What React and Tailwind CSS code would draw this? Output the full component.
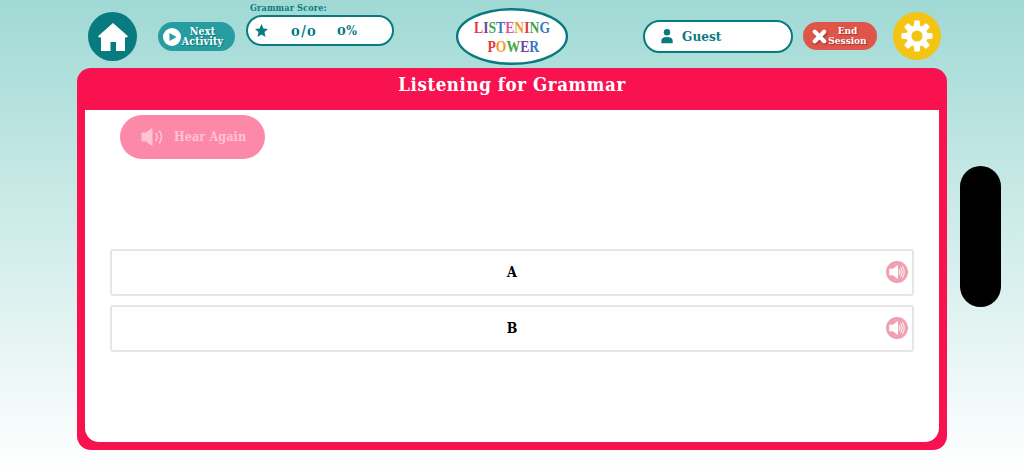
import { clsx } from 'clsx';

const answers = ['A', 'B'];

const logoLines = [
  {
    y: 25,
    x: 18,
    letters: [
      ['L', '#df3b3f'], ['I', '#7444a0'], ['S', '#3fa545'], ['T', '#3c78c3'], ['E', '#d659a5'],
      ['N', '#f39a2c'], ['I', '#df3b3f'], ['N', '#3fa545'], ['G', '#3c78c3'],
    ],
  },
  {
    y: 43.5,
    x: 31.5,
    letters: [['P', '#df3b3f'], ['O', '#f39a2c'], ['W', '#3fa545'], ['E', '#7444a0'], ['R', '#3c78c3']],
  },
];

const HomeIcon = () => (
  <svg viewBox="0 0 30 28" className="w-[30px] h-7 fill-white">
    <path d="M15 0 30 13.2 28.6 14.6H27V28H18V19H12.5V28H3V14.6H1.4L0 13.2Z" />
  </svg>
);

const GearIcon = () => (
  <svg viewBox="0 0 32 32" className="w-8 h-8">
    <g className="fill-white">
      {[0, 45, 90, 135, 180, 225, 270, 315].map((angle) => (
        <path key={angle} d="M13.2 1.2Q13.2 .5 13.9 .5H18.1Q18.8 .5 18.8 1.2L19.4 8H12.6Z" transform={`rotate(${angle} 16 16)`} />
      ))}
      <circle cx="16" cy="16" r="10.6" />
    </g>
    <circle cx="16" cy="16" r="5.6" fill="#f4c414" />
  </svg>
);

const SpeakerIcon = ({ className }) => (
  <svg viewBox="0 0 22 18" className={className} fill="none" stroke="currentColor" strokeWidth="1.6" strokeLinecap="round">
    <path d="M.5 5.5Q.5 4.5 1.5 4.5H5L10.2.6Q11.5 0 11.5 1.3V16.7Q11.5 18 10.2 17.4L5 13.5H1.5Q.5 13.5 .5 12.5Z" fill="currentColor" stroke="none" />
    <path d="M15 5.5Q17.2 9 15 12.5M18.6 3.2Q22.4 9 18.6 14.8" />
  </svg>
);

const RoundSpeaker = () => (
  <svg viewBox="0 0 22 22" className="w-[22px] h-[22px]">
    <circle cx="11" cy="11" r="11" fill="#efa0b1" />
    <path d="M3.2 7.7H6.8L12 4V18L6.8 14.3H3.2Z" fill="#fff" />
    <path d="M13.4 8.5Q15 11 13.4 13.5M15 6.8Q17.6 11 15 15.2M16.6 5.3Q20 11 16.6 16.7" fill="none" stroke="#fff" strokeWidth="1" strokeLinecap="round" />
  </svg>
);

const Logo = () => (
  <svg viewBox="0 0 112 57" className="w-28 h-[57px] ml-[62px] mt-[7.5px] shrink-0">
    <ellipse cx="56" cy="28.5" rx="54.9" ry="27.3" fill="#fff" stroke="#087b81" strokeWidth="2.4" />
    {logoLines.map((line) => (
      <g key={line.y} transform={`translate(${line.x} ${line.y}) scale(.805 1)`}>
        <text className="font-['Liberation_Serif',serif] text-[17px] font-bold">
          {line.letters.map(([letter, color], i) => (
            <tspan key={i} fill={color}>{letter}</tspan>
          ))}
        </text>
      </g>
    ))}
  </svg>
);

// Zero drawn at x-height, like an old-style figure
const Zero = () => <span className="inline-block text-[11.5px] leading-none scale-x-125">0</span>;

const Header = () => (
  <header className="flex items-start h-[68px] pl-[88px]">
    <button className="flex items-center justify-center shrink-0 w-[49px] h-[49px] mt-3 rounded-full bg-[#087b81]">
      <HomeIcon />
    </button>

    <button className="flex items-center shrink-0 w-[77px] h-[29px] ml-[21px] mt-[22px] pl-[5px] rounded-full bg-[#279da2] text-white">
      <svg viewBox="0 0 18 18" className="w-[18px] h-[18px] shrink-0">
        <circle cx="9" cy="9" r="9" fill="#fff" />
        <path d="M6.5 5 13.5 9 6.5 13Z" fill="#279da2" />
      </svg>
      <span className="w-[43px] -mt-[2px] text-center text-[10.5px] leading-[10px] tracking-[.2px] font-bold [text-shadow:1px_1px_1px_#08777b]">
        Next<br />Activity
      </span>
    </button>

    <div className="w-[148px] shrink-0 ml-[11px] pt-[2px] text-[#087b81] font-bold">
      <div className="h-[13px] pl-1 text-[9px] leading-3 tracking-[.15px] whitespace-nowrap">Grammar Score:</div>
      <div className="flex items-center h-[31px] rounded-full border-2 border-[#087b81] bg-white pl-[7px]">
        <svg viewBox="0 0 24 24" className="w-[13px] h-[13px] fill-[#087b81]">
          <path d="M12 0 15.5 8.2 24 9.1 17.5 14.8 19.4 24 12 19.2 4.6 24 6.5 14.8 0 9.1 8.5 8.2Z" />
        </svg>
        <span className="ml-[24px] w-[46px] text-[14px] leading-5 whitespace-nowrap"><Zero /><span className="px-[2px]">/</span><Zero /></span>
        <span className="text-[12.5px] leading-5 whitespace-nowrap"><Zero /><span className="pl-[1px]">%</span></span>
      </div>
    </div>

    <Logo />

    <div className="flex items-center shrink-0 w-[150px] h-[33px] ml-[75px] mt-5 pl-4 rounded-full border-2 border-[#087b81] bg-white text-[#087b81]">
      <svg viewBox="0 0 12 15" className="w-3 h-[15px] fill-[#087b81]">
        <circle cx="6" cy="3.3" r="3.2" />
        <path d="M.3 14.2V12Q.3 8 6 8T11.7 12V14.2Z" />
      </svg>
      <span className="ml-[9px] -mt-px text-[13.5px] leading-5 font-bold">Guest</span>
    </div>

    <button className="flex items-center shrink-0 w-[74px] h-[28px] ml-[10px] mt-[22px] pl-[9px] rounded-full bg-[#df5549] text-white">
      <svg viewBox="0 0 16 16" className="w-[15px] h-[15px] shrink-0 drop-shadow-[1px_1px_1px_#9b3129]" stroke="#fff" strokeWidth="4.6" strokeLinecap="round">
        <path d="M3 3 13 13M13 3 3 13" />
      </svg>
      <span className="w-[41px] text-center text-[10px] leading-[10px] font-bold [text-shadow:1px_1px_1px_#9b3129]">
        End<br />Session
      </span>
    </button>

    <button className="flex items-center justify-center shrink-0 w-12 h-12 ml-4 mt-3 rounded-full bg-[#f4c414]">
      <GearIcon />
    </button>
  </header>
);

const AnswerRow = ({ label, className }) => (
  <div className={clsx('grid grid-cols-[1fr_auto_1fr] items-center h-[47px] pr-1 pb-px border-[2.5px] border-[#e6e6e6] rounded-[3px] bg-white', className)}>
    <span className="col-start-2 text-[14px] leading-5 font-bold text-black pl-[4px]">{label}</span>
    <button className="justify-self-end"><RoundSpeaker /></button>
  </div>
);

export default function App() {
  return (
    <div className="w-[1024px] h-[473px] overflow-hidden bg-linear-to-b from-[#a0d9d5] via-[#ccebe8] via-45% to-white font-['DejaVu_Serif_Condensed','DejaVu_Serif',serif]">
      <Header />

      <div className="flex items-start pl-[77px]">
        <main className="w-[870px] h-[382px] shrink-0 px-2 pb-2 rounded-[14px] bg-[#f8124f]">
          <h1 className="h-[42px] pt-[5px] text-center text-[18.5px] leading-6 tracking-[.6px] font-bold text-white">
            Listening for Grammar
          </h1>
          <section className="h-[332px] px-[25px] pt-[5px] rounded-b-[14px] bg-white">
            <button disabled className="flex items-center w-[145px] h-[44px] ml-[10px] pl-[21px] rounded-[24px] bg-[#fd89a8] text-[#ffc4d4]">
              <SpeakerIcon className="w-[22px] h-[18px]" />
              <span className="ml-[11px] text-[12.5px] leading-5 tracking-[.1px] font-bold whitespace-nowrap">Hear Again</span>
            </button>
            <AnswerRow label={answers[0]} className="mt-[90px]" />
            <AnswerRow label={answers[1]} className="mt-[9px]" />
          </section>
        </main>

        <div className="w-[41px] h-[141px] ml-[13px] mt-[98px] rounded-full bg-black" />
      </div>
    </div>
  );
}
